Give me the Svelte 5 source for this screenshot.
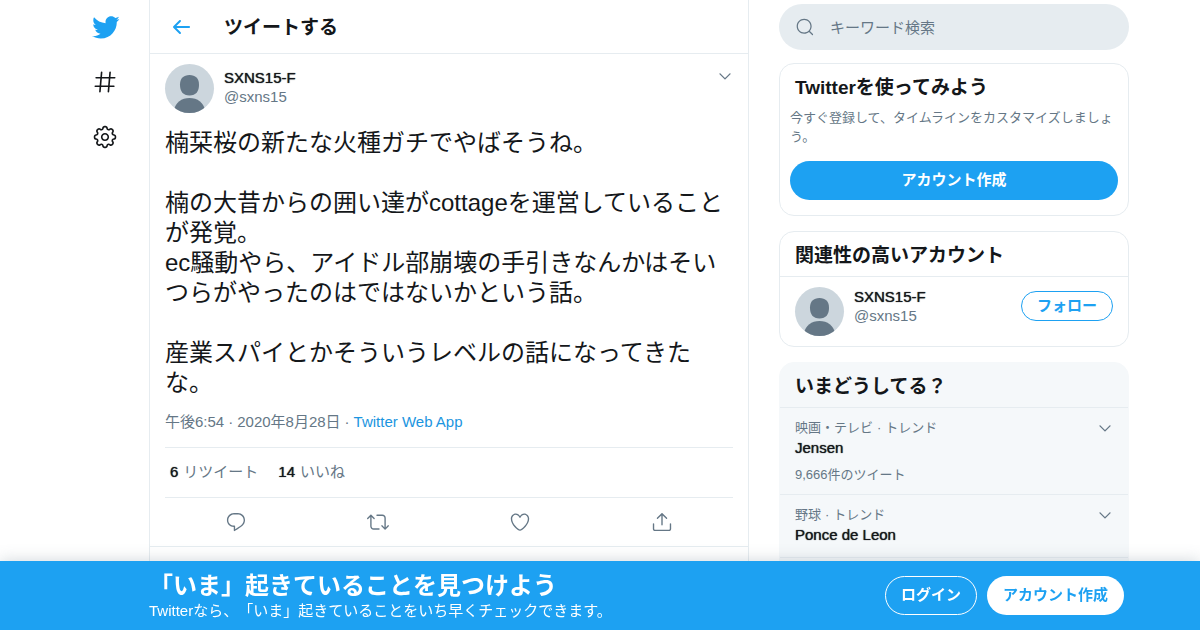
<script lang="ts">
  const user = { name: 'SXNS15-F', handle: '@sxns15' };

  const tweet = {
    lines: [
      '楠栞桜の新たな火種ガチでやばそうね。',
      '',
      '楠の大昔からの囲い達がcottageを運営していること',
      'が発覚。',
      'ec騒動やら、アイドル部崩壊の手引きなんかはそい',
      'つらがやったのはではないかという話。',
      '',
      '産業スパイとかそういうレベルの話になってきた',
      'な。',
    ],
    time: '午後6:54',
    date: '2020年8月28日',
    source: 'Twitter Web App',
    retweets: 6,
    likes: 14,
  };

  const trends: { category: string; name: string; count?: string }[] = [
    { category: '映画・テレビ', name: 'Jensen', count: '9,666件のツイート' },
    { category: '野球', name: 'Ponce de Leon' },
  ];

  const icons = {
    bird: 'M23.643 4.937c-.835.37-1.732.62-2.675.733.962-.576 1.7-1.49 2.048-2.578-.9.534-1.897.922-2.958 1.13-.85-.904-2.06-1.47-3.4-1.47-2.572 0-4.658 2.086-4.658 4.66 0 .364.042.718.12 1.06-3.873-.195-7.304-2.05-9.602-4.868-.4.69-.63 1.49-.63 2.342 0 1.616.823 3.043 2.072 3.878-.764-.025-1.482-.234-2.11-.583v.06c0 2.257 1.605 4.14 3.737 4.568-.392.106-.803.162-1.227.162-.3 0-.593-.028-.877-.082.593 1.85 2.313 3.198 4.352 3.234-1.595 1.25-3.604 1.995-5.786 1.995-.376 0-.747-.022-1.112-.065 2.062 1.323 4.51 2.093 7.14 2.093 8.57 0 13.255-7.098 13.255-13.254 0-.2-.005-.402-.014-.602.91-.658 1.7-1.477 2.323-2.41z',
    hash: 'M21 7.337h-3.93l.372-4.272c.036-.412-.27-.775-.682-.812-.417-.03-.776.27-.812.683l-.383 4.4h-6.32l.37-4.27c.037-.413-.27-.776-.68-.813-.42-.03-.777.27-.813.683l-.382 4.4H3.782c-.414 0-.75.337-.75.75s.336.75.75.75H7.61l-.55 6.327H3c-.414 0-.75.336-.75.75s.336.75.75.75h3.93l-.372 4.272c-.036.412.27.775.682.812l.066.003c.385 0 .712-.295.746-.686l.383-4.4h6.32l-.37 4.27c-.036.413.27.776.682.813l.066.003c.385 0 .712-.295.746-.686l.382-4.4h3.957c.413 0 .75-.337.75-.75s-.337-.75-.75-.75H16.39l.55-6.327H21c.414 0 .75-.336.75-.75s-.336-.75-.75-.75zm-6.115 7.826h-6.32l.55-6.326h6.32l-.55 6.326z',
    gear: 'M12 8.21c-2.09 0-3.79 1.7-3.79 3.79s1.7 3.79 3.79 3.79 3.79-1.7 3.79-3.79-1.7-3.79-3.79-3.79zm0 6.08c-1.262 0-2.29-1.026-2.29-2.29S10.74 9.71 12 9.71s2.29 1.026 2.29 2.29-1.028 2.29-2.29 2.29z M12.36 22.375h-.722c-1.183 0-2.154-.888-2.262-2.064l-.014-.147c-.025-.287-.207-.533-.472-.644-.286-.12-.582-.065-.798.115l-.116.097c-.868.725-2.253.663-3.06-.14l-.51-.51c-.836-.84-.896-2.154-.14-3.06l.098-.118c.186-.222.23-.523.122-.787-.11-.272-.358-.454-.646-.48l-.15-.014c-1.18-.107-2.067-1.08-2.067-2.262v-.722c0-1.183.888-2.154 2.064-2.262l.156-.014c.285-.025.53-.207.642-.473.11-.27.065-.573-.12-.795l-.094-.116c-.757-.908-.698-2.223.137-3.06l.512-.512c.804-.804 2.188-.865 3.06-.14l.116.098c.218.184.528.23.79.122.27-.112.452-.358.477-.643l.014-.153c.107-1.18 1.08-2.066 2.262-2.066h.722c1.183 0 2.154.888 2.262 2.064l.014.156c.025.285.206.53.472.64.277.117.58.062.794-.117l.12-.102c.867-.723 2.254-.662 3.06.14l.51.512c.836.838.896 2.153.14 3.06l-.1.118c-.188.22-.234.522-.123.788.112.27.36.45.646.478l.152.014c1.18.107 2.067 1.08 2.067 2.262v.723c0 1.183-.888 2.154-2.064 2.262l-.155.014c-.284.024-.53.205-.64.47-.113.272-.067.574.117.795l.1.12c.756.905.696 2.22-.14 3.06l-.51.51c-.807.804-2.19.864-3.06.14l-.115-.096c-.217-.183-.53-.23-.79-.122-.273.114-.455.36-.48.646l-.014.15c-.107 1.173-1.08 2.06-2.262 2.06zm-3.773-4.42c.3 0 .593.06.87.175.79.328 1.324 1.054 1.4 1.896l.014.147c.037.4.367.7.77.7h.722c.4 0 .73-.3.768-.7l.014-.148c.076-.842.61-1.567 1.392-1.892.793-.33 1.696-.182 2.333.35l.113.094c.178.148.366.18.493.18.206 0 .4-.08.546-.227l.51-.51c.284-.284.305-.73.048-1.038l-.1-.12c-.542-.65-.677-1.54-.352-2.323.326-.79 1.052-1.32 1.894-1.397l.155-.014c.397-.037.7-.367.7-.77v-.722c0-.4-.303-.73-.702-.768l-.152-.014c-.846-.078-1.57-.61-1.895-1.393-.326-.788-.19-1.678.353-2.327l.1-.118c.257-.31.236-.756-.048-1.04l-.51-.51c-.146-.147-.34-.227-.546-.227-.127 0-.315.032-.492.18l-.12.1c-.634.528-1.55.67-2.322.354-.788-.327-1.32-1.052-1.397-1.896l-.014-.155c-.035-.397-.365-.7-.767-.7h-.723c-.4 0-.73.303-.768.702l-.014.152c-.076.843-.608 1.568-1.39 1.893-.787.326-1.693.183-2.33-.35l-.118-.096c-.18-.15-.368-.18-.495-.18-.206 0-.4.08-.546.226l-.512.51c-.282.284-.303.73-.046 1.038l.1.118c.54.653.677 1.544.352 2.325-.327.788-1.052 1.32-1.895 1.397l-.156.014c-.397.037-.7.367-.7.77v.722c0 .4.303.73.702.768l.15.014c.848.078 1.573.612 1.897 1.396.325.786.19 1.675-.353 2.325l-.096.115c-.26.31-.238.756.046 1.04l.51.51c.146.147.34.227.546.227.127 0 .315-.03.492-.18l.116-.096c.406-.336.923-.524 1.453-.524z',
    back: 'M20 11H7.414l4.293-4.293c.39-.39.39-1.023 0-1.414s-1.023-.39-1.414 0l-6 6c-.39.39-.39 1.023 0 1.414l6 6c.195.195.45.293.707.293s.512-.098.707-.293c.39-.39.39-1.023 0-1.414L7.414 13H20c.553 0 1-.447 1-1s-.447-1-1-1z',
    chevron: 'M20.207 8.147c-.39-.39-1.023-.39-1.414 0L12 14.94 5.207 8.147c-.39-.39-1.023-.39-1.414 0-.39.39-.39 1.023 0 1.414l7.5 7.5c.195.196.45.294.707.294s.512-.098.707-.293l7.5-7.5c.39-.39.39-1.022 0-1.413z',
    search: 'M21.53 20.47l-3.66-3.66C19.195 15.24 20 13.214 20 11c0-4.97-4.03-9-9-9s-9 4.03-9 9 4.03 9 9 9c2.215 0 4.24-.804 5.808-2.13l3.66 3.66c.147.146.34.22.53.22s.385-.073.53-.22c.295-.293.295-.767.002-1.06zM3.5 11c0-4.135 3.365-7.5 7.5-7.5s7.5 3.365 7.5 7.5-3.365 7.5-7.5 7.5-7.5-3.365-7.5-7.5z',
  };

  const actions = [
    { label: '返信', path: 'M14.046 2.242l-4.148-.01h-.002c-4.374 0-7.8 3.427-7.8 7.802 0 4.098 3.186 7.206 7.465 7.37v3.828c0 .108.044.286.12.403.142.225.384.347.632.347.138 0 .277-.038.402-.118.264-.168 6.473-4.14 8.088-5.506 1.902-1.61 3.04-3.97 3.043-6.312v-.017c-.006-4.367-3.43-7.787-7.8-7.788zm3.787 12.972c-1.134.96-4.862 3.405-6.772 4.643V16.67c0-.414-.335-.75-.75-.75h-.396c-3.66 0-6.318-2.476-6.318-5.886 0-3.534 2.768-6.302 6.3-6.302l4.147.01h.002c3.532 0 6.3 2.766 6.302 6.296-.003 1.91-.942 3.844-2.514 5.176z' },
    { label: 'リツイート', path: 'M23.77 15.67c-.292-.293-.767-.293-1.06 0l-2.22 2.22V7.65c0-2.068-1.683-3.75-3.75-3.75h-5.85c-.414 0-.75.336-.75.75s.336.75.75.75h5.85c1.24 0 2.25 1.01 2.25 2.25v10.24l-2.22-2.22c-.293-.293-.768-.293-1.06 0s-.294.768 0 1.06l3.5 3.5c.145.147.337.22.53.22s.383-.072.53-.22l3.5-3.5c.294-.292.294-.767 0-1.06zm-10.66 3.28H7.26c-1.24 0-2.25-1.01-2.25-2.25V6.46l2.22 2.22c.148.147.34.22.532.22s.384-.073.53-.22c.293-.293.293-.768 0-1.06l-3.5-3.5c-.293-.294-.768-.294-1.06 0l-3.5 3.5c-.294.292-.294.767 0 1.06s.767.293 1.06 0l2.22-2.22V16.7c0 2.068 1.683 3.75 3.75 3.75h5.85c.414 0 .75-.336.75-.75s-.337-.75-.75-.75z' },
    { label: 'いいね', path: 'M12 21.638h-.014C9.403 21.59 1.95 14.856 1.95 8.478c0-3.064 2.525-5.754 5.403-5.754 2.29 0 3.83 1.58 4.646 2.73.814-1.148 2.354-2.73 4.645-2.73 2.88 0 5.404 2.69 5.404 5.755 0 6.376-7.454 13.11-10.037 13.157H12zM7.354 4.225c-2.08 0-3.903 1.988-3.903 4.255 0 5.74 7.034 11.596 8.55 11.658 1.518-.062 8.55-5.917 8.55-11.658 0-2.267-1.823-4.255-3.903-4.255-2.528 0-3.94 2.936-3.952 2.965-.23.562-1.156.562-1.387 0-.014-.03-1.425-2.965-3.954-2.965z' },
    { label: '共有', path: 'M17.53 7.47l-5-5c-.293-.293-.768-.293-1.06 0l-5 5c-.294.293-.294.768 0 1.06s.767.294 1.06 0l3.72-3.72V15c0 .414.336.75.75.75s.75-.336.75-.75V4.81l3.72 3.72c.146.147.338.22.53.22s.384-.072.53-.22c.293-.293.293-.767 0-1.06z M19.708 21.944H4.292C3.028 21.944 2 20.916 2 19.652V14c0-.414.336-.75.75-.75s.75.336.75.75v5.652c0 .437.355.792.792.792h15.416c.437 0 .792-.355.792-.792V14c0-.414.336-.75.75-.75s.75.336.75.75v5.652c0 1.264-1.028 2.292-2.292 2.292z' },
  ];

  let query = '';
</script>

{#snippet icon(path: string, size: number)}
  <svg viewBox="0 0 24 24" width={size} height={size} aria-hidden="true"><path d={path} /></svg>
{/snippet}

{#snippet avatar()}
  <a class="avatar" href="#profile" aria-label={user.name}>
    <svg viewBox="0 0 49 49" width="49" height="49" aria-hidden="true">
      <path fill="#657786" d="M24.5 11c6 0 9.500 3.500 9.500 9.500 0 7-3 11-9.500 11S15 27.500 15 20.500C15 14.500 18.500 11 24.500 11z" />
      <path fill="#657786" d="M9 46c1.500-7.500 7.500-12 15.500-12S38.500 38.500 40 46v4H9z" />
    </svg>
  </a>
{/snippet}

{#snippet names()}
  <div class="names">
    <a class="name" href="#profile">{user.name}</a>
    <span class="handle">{user.handle}</span>
  </div>
{/snippet}

<div class="layout">
  <nav class="nav">
    <a class="logo" href="#home" aria-label="Twitter">{@render icon(icons.bird, 29)}</a>
    <a href="#explore" aria-label="話題を検索">{@render icon(icons.hash, 26)}</a>
    <a href="#settings" aria-label="設定">{@render icon(icons.gear, 26)}</a>
  </nav>

  <main class="main">
    <header class="main-header">
      <button class="icon-button back" aria-label="戻る">{@render icon(icons.back, 24)}</button>
      <h1>ツイートする</h1>
    </header>

    <article class="tweet">
      <div class="tweet-author">
        {@render avatar()}
        {@render names()}
        <button class="icon-button more" aria-label="もっと見る">{@render icon(icons.chevron, 16)}</button>
      </div>
      <p class="tweet-text">{tweet.lines.join('\n')}</p>
      <div class="tweet-meta">
        <span>{tweet.time}</span><span class="dot">·</span><span>{tweet.date}</span><span class="dot">·</span><a href="#source">{tweet.source}</a>
      </div>
      <div class="tweet-stats">
        <span><b>{tweet.retweets}</b>リツイート</span>
        <span><b>{tweet.likes}</b>いいね</span>
      </div>
      <div class="tweet-actions">
        {#each actions as action}
          <button class="icon-button" aria-label={action.label}>{@render icon(action.path, 22)}</button>
        {/each}
      </div>
    </article>
  </main>

  <aside class="sidebar">
    <label class="search">
      {@render icon(icons.search, 20)}
      <input type="text" placeholder="キーワード検索" aria-label="キーワード検索" bind:value={query} />
    </label>

    <section class="card signup">
      <h2>Twitterを使ってみよう</h2>
      <p>今すぐ登録して、タイムラインをカスタマイズしましょう。</p>
      <button class="pill filled">アカウント作成</button>
    </section>

    <section class="card">
      <h2 class="ruled">関連性の高いアカウント</h2>
      <div class="account">
        {@render avatar()}
        <div class="account-row">
          {@render names()}
          <button class="pill outline small">フォロー</button>
        </div>
      </div>
    </section>

    <section class="card trends">
      <h2 class="ruled">いまどうしてる？</h2>
      {#each trends as trend}
        <div class="trend">
          <div class="trend-top">
            <span>{trend.category}<span class="dot">·</span>トレンド</span>
            <button class="icon-button" aria-label="もっと見る">{@render icon(icons.chevron, 16)}</button>
          </div>
          <a class="trend-name" href="#trend">{trend.name}</a>
          {#if trend.count}
            <div class="trend-count">{trend.count}</div>
          {/if}
        </div>
      {/each}
    </section>
  </aside>
</div>

<div class="bottom-bar">
  <div class="bottom-inner">
    <div class="bottom-text">
      <strong>「いま」起きていることを見つけよう</strong>
      <span>Twitterなら、「いま」起きていることをいち早くチェックできます。</span>
    </div>
    <button class="pill login">ログイン</button>
    <button class="pill white">アカウント作成</button>
  </div>
</div>

<style>
  :global(body) {
    background: #fff;
    color: #14171a;
    font-family: "Liberation Sans", "Noto Sans CJK JP", sans-serif;
    font-size: 15px;
    line-height: 19px;
    text-spacing-trim: space-all;
  }
  h1, h2, p {
    margin: 0;
  }
  h1, h2 {
    font-size: 19px;
    line-height: 24px;
    font-weight: 700;
  }
  a {
    color: inherit;
    text-decoration: none;
  }
  svg {
    display: block;
    flex: none;
    fill: currentColor;
  }
  .layout {
    display: flex;
    box-sizing: border-box;
    max-width: 1078px;
    height: 100vh;
    margin: 0 auto;
    overflow: hidden;
  }

  .nav {
    flex: 0 0 88px;
    display: flex;
    flex-direction: column;
  }
  .nav a {
    display: flex;
    align-items: center;
    justify-content: center;
    height: 55px;
  }
  .nav .logo {
    height: 54px;
    color: #1da1f2;
  }

  .main {
    flex: 0 1 600px;
    box-sizing: border-box;
    min-width: 0;
    border: solid #e6ecf0;
    border-width: 0 1px;
  }
  .main-header {
    display: flex;
    align-items: center;
    height: 53px;
    padding: 0 15px;
    border-bottom: 1px solid #e6ecf0;
  }
  .main-header h1 {
    padding-top: 2px;
  }
  .icon-button {
    display: flex;
    padding: 0;
    border: 0;
    background: none;
    color: #657786;
    cursor: pointer;
  }
  .back {
    width: 59px;
    padding-left: 4px;
    color: #1da1f2;
  }

  .tweet {
    padding: 10px 15px 0;
    border-bottom: 1px solid #e6ecf0;
  }
  .tweet-author {
    display: flex;
    gap: 10px;
  }
  .tweet-author .names {
    padding-top: 4px;
  }
  .more {
    align-self: flex-start;
    margin: 4px 0 0 auto;
  }
  .avatar {
    flex: none;
    border-radius: 50%;
    overflow: hidden;
    background: #ccd6dd;
  }
  .names {
    display: flex;
    flex-direction: column;
  }
  /* semi-bold look on the regular Latin face */
  .name, .trend-name, .tweet-stats b {
    font-weight: 400;
    text-shadow: 0 0 1px currentColor;
    color: #14171a;
  }
  .handle {
    color: #657786;
  }
  .tweet-text {
    margin-top: 15px;
    font-size: 24px;
    line-height: 30px;
    white-space: pre-wrap;
  }
  .tweet-meta {
    padding: 14px 0 16px;
    color: #657786;
  }
  .tweet-meta a {
    color: #1b95e0;
  }
  .dot {
    margin: 0 4px;
  }
  .tweet-stats {
    display: flex;
    gap: 20px;
    padding: 14px 5px 16px;
    border: solid #e6ecf0;
    border-width: 1px 0;
    color: #657786;
  }
  .tweet-stats b {
    margin-right: 5px;
  }
  .tweet-actions {
    display: flex;
    justify-content: space-around;
    padding: 13px 0;
  }

  .sidebar {
    flex: 0 0 350px;
    display: flex;
    flex-direction: column;
    margin: 0 10px 0 30px;
  }
  .search {
    display: flex;
    align-items: center;
    height: 46px;
    margin: 4px 0 13px;
    padding: 0 16px;
    box-sizing: border-box;
    gap: 15px;
    border-radius: 23px;
    background: #e6ecf0;
    color: #657786;
  }
  .search input {
    flex: 1;
    min-width: 0;
    padding: 0;
    border: 0;
    outline: 0;
    background: none;
    color: #14171a;
    font: inherit;
  }
  .search input::placeholder {
    color: #657786;
    opacity: 1;
  }
  .card {
    margin-bottom: 15px;
    border: 1px solid #e6ecf0;
    border-radius: 15px;
  }
  .card h2 {
    padding: 12px 15px 8px;
  }
  .ruled {
    border-bottom: 1px solid #e6ecf0;
  }
  .signup p {
    padding: 0 10px;
    color: #657786;
    font-size: 13px;
  }
  .signup {
    display: flex;
    flex-direction: column;
  }
  .signup .pill {
    margin: 15px 10px;
  }
  .account {
    display: flex;
    gap: 10px;
    padding: 10px 15px;
  }
  .account-row {
    flex: 1;
    display: flex;
    align-items: center;
    justify-content: space-between;
    height: 38px;
  }
  .trends {
    flex: 1 0 auto;
    margin-bottom: 0;
    border-color: #f5f8fa;
    background: #f5f8fa;
  }
  .trend {
    padding: 10px 15px;
    border-bottom: 1px solid #e6ecf0;
  }
  .trend-top {
    display: flex;
    align-items: center;
    justify-content: space-between;
    color: #657786;
    font-size: 13px;
  }
  .trend-name {
    display: block;
    padding: 1px 0 3px;
  }
  .trend-count {
    margin-top: 5px;
    color: #657786;
    font-size: 13px;
  }

  .pill {
    box-sizing: border-box;
    height: 39px;
    padding: 0 15px 2px;
    border: 1px solid transparent;
    border-radius: 20px;
    background: none;
    color: #fff;
    font: inherit;
    font-weight: 700;
    white-space: nowrap;
    cursor: pointer;
  }
  .filled {
    background: #1da1f2;
  }
  .outline {
    border-color: #1da1f2;
    color: #1da1f2;
  }
  .small {
    height: 30px;
  }
  .login {
    border-color: #fff;
  }
  .white {
    background: #fff;
    color: #1da1f2;
  }

  .bottom-bar {
    position: fixed;
    left: 0;
    right: 0;
    bottom: 0;
    background: #1da1f2;
    color: #fff;
    box-shadow: 0 0 15px rgba(101, 119, 134, 0.3);
  }
  .bottom-inner {
    display: flex;
    align-items: center;
    gap: 10px;
    box-sizing: border-box;
    max-width: 1078px;
    margin: 0 auto;
    padding: 10px 15px 10px 88px;
  }
  .bottom-text {
    flex: 1;
    display: flex;
    flex-direction: column;
  }
  .bottom-text strong {
    font-size: 24px;
    line-height: 30px;
  }
</style>
